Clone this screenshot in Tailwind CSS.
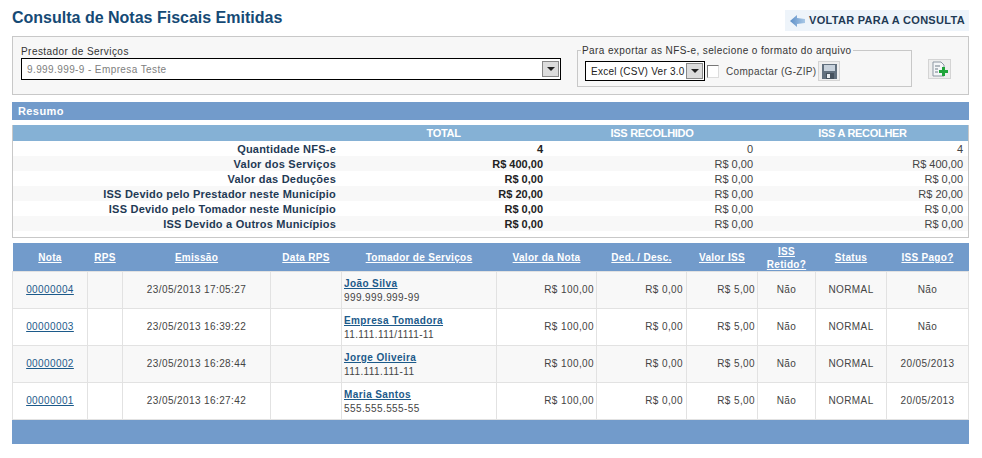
<!DOCTYPE html>
<html lang="pt-BR">
<head>
<meta charset="UTF-8" />
<title>Consulta de Notas Fiscais Emitidas</title>
<script src="https://cdn.jsdelivr.net/npm/@tailwindcss/browser@4"></script>
</head>
<body class="bg-white font-['Liberation_Sans',Arial,sans-serif] text-[10px] tracking-[0.4px] text-[#444] overflow-hidden">
<div class="w-[957px] ml-3">

  <!-- titulo -->
  <div class="flex justify-between h-[36px]">
    <h1 class="text-[16px] leading-[18px] pt-[9px] font-bold tracking-normal text-[#154a75]">Consulta de Notas Fiscais Emitidas</h1>
    <a class="mt-[10px] h-[21px] w-[184px] bg-[#eef4fa] flex items-center pl-[5px] gap-[4px] text-[11px] font-bold text-[#1f3a55] tracking-[0.3px] whitespace-nowrap">
      <svg class="w-[15px] h-[12px]" viewBox="0 0 15 12"><defs><linearGradient id="seta"><stop offset="0" stop-color="#5f90c8"/><stop offset="1" stop-color="#a9c8e6"/></linearGradient></defs><path d="M0 6 L7 0 V3 L15 4 V8 L7 9 V12 Z" fill="url(#seta)"/></svg>
      VOLTAR PARA A CONSULTA
    </a>
  </div>

  <!-- filtros -->
  <div class="h-[59px] border border-[#c8c8c8] bg-[#f7f7f7] flex items-start">
    <div class="ml-[8px] w-[540px] pt-[8px]">
      <div class="leading-[13px] text-[#333] tracking-[0.45px]">Prestador de Serviços</div>
      <div class="h-[22px] border border-black bg-white flex items-center justify-between pl-[5px] pr-px text-[#808080]">
        9.999.999-9 - Empresa Teste
        <span class="w-[17px] h-[16px] border border-[#888] bg-[#dcdcdc] flex items-center justify-center">
          <svg class="w-[8px] h-[4px]" viewBox="0 0 8 4"><path d="M0 0H8L4 4Z" fill="#222"/></svg>
        </span>
      </div>
    </div>
    <fieldset class="ml-[16px] mt-[7px] w-[335px] h-[43px] border border-[#c8c8c8] p-0 min-w-0">
      <legend class="ml-[3px] px-[1px] leading-[13px] text-[#333]">Para exportar as NFS-e, selecione o formato do arquivo</legend>
      <div class="flex items-center pl-[7px] mt-[4px]">
        <span class="w-[120px] h-[20px] border border-black bg-white flex items-center justify-between pl-[5px] pr-px tracking-[0.25px] text-[#222] whitespace-nowrap">
          Excel (CSV) Ver 3.0
          <span class="w-[17px] h-[16px] border border-[#888] bg-[#dcdcdc] flex items-center justify-center">
            <svg class="w-[8px] h-[4px]" viewBox="0 0 8 4"><path d="M0 0H8L4 4Z" fill="#222"/></svg>
          </span>
        </span>
        <span class="ml-[2px] w-[12px] h-[13px] border border-t-[#777] border-l-[#777] border-r-[#ddd] border-b-[#ddd] bg-white"></span>
        <span class="ml-[7px] tracking-[0.32px] whitespace-nowrap">Compactar (G-ZIP)</span>
        <span class="ml-[2px] w-[22px] h-[20px] border border-[#d4d4d4] bg-[#eee] flex items-center justify-center">
          <svg class="w-[15px] h-[15px]" viewBox="0 0 15 15"><path d="M0 0H15V15H0Z" fill="#62707e"/><path d="M2 1H13V7H2Z" fill="#c8d2dc"/><path d="M4 9H12V15H4Z" fill="#46525e"/><path d="M5 10H8V14H5Z" fill="#e8ecef"/></svg>
        </span>
      </div>
    </fieldset>
    <span class="ml-[16px] mt-[22px] w-[23px] h-[20px] border border-[#d4d4d4] bg-[#eee] flex items-center justify-center">
      <svg class="w-[18px] h-[16px]" viewBox="0 0 18 16"><path d="M2 1H10L13 4V15H2Z" fill="#f4f6f8" stroke="#8d98a3"/><path d="M4 5H9M4 8H7M4 11H7" stroke="#6f7c88"/><path d="M11 6H14V9H17V12H14V15H11V12H8V9H11Z" fill="#1fa53a"/></svg>
    </span>
  </div>

  <!-- resumo -->
  <div class="mt-[7px] h-[18px] bg-[#729bcb] text-white text-[11px] font-bold pl-[6px] leading-[18px]">Resumo</div>
  <div class="mt-[5px] border-x border-b border-[#c8c8c8] h-[113px]">
    <table class="w-full table-fixed border-collapse text-[11px] leading-[15px]">
      <colgroup><col class="w-[327px]" /><col class="w-[207px]" /><col class="w-[210px]" /><col /></colgroup>
      <thead class="bg-[#85b1d5] text-white font-bold text-center tracking-[-0.3px]">
        <tr class="h-[16px]"><th></th><th>TOTAL</th><th>ISS RECOLHIDO</th><th>ISS A RECOLHER</th></tr>
      </thead>
      <tbody class="text-right tracking-normal [&_td]:pt-[2px] [&_td]:leading-[13px]">
        <tr class="h-[15px]"><td class="pr-[4px] font-bold text-[#1f3a55] tracking-[0.22px]">Quantidade NFS-e</td><td class="pr-[4px] font-bold text-[#222]">4</td><td class="pr-[4px]">0</td><td class="pr-[5px]">4</td></tr>
        <tr class="h-[15px] bg-[#f8f8f8]"><td class="pr-[4px] font-bold text-[#1f3a55] tracking-[0.22px]">Valor dos Serviços</td><td class="pr-[4px] font-bold text-[#222]">R$ 400,00</td><td class="pr-[4px]">R$ 0,00</td><td class="pr-[5px]">R$ 400,00</td></tr>
        <tr class="h-[15px]"><td class="pr-[4px] font-bold text-[#1f3a55] tracking-[0.22px]">Valor das Deduções</td><td class="pr-[4px] font-bold text-[#222]">R$ 0,00</td><td class="pr-[4px]">R$ 0,00</td><td class="pr-[5px]">R$ 0,00</td></tr>
        <tr class="h-[15px] bg-[#f8f8f8]"><td class="pr-[4px] font-bold text-[#1f3a55] tracking-[0.22px]">ISS Devido pelo Prestador neste Município</td><td class="pr-[4px] font-bold text-[#222]">R$ 20,00</td><td class="pr-[4px]">R$ 0,00</td><td class="pr-[5px]">R$ 20,00</td></tr>
        <tr class="h-[15px]"><td class="pr-[4px] font-bold text-[#1f3a55] tracking-[0.22px]">ISS Devido pelo Tomador neste Município</td><td class="pr-[4px] font-bold text-[#222]">R$ 0,00</td><td class="pr-[4px]">R$ 0,00</td><td class="pr-[5px]">R$ 0,00</td></tr>
        <tr class="h-[15px] bg-[#f8f8f8]"><td class="pr-[4px] font-bold text-[#1f3a55] tracking-[0.22px]">ISS Devido a Outros Municípios</td><td class="pr-[4px] font-bold text-[#222]">R$ 0,00</td><td class="pr-[4px]">R$ 0,00</td><td class="pr-[5px]">R$ 0,00</td></tr>
      </tbody>
    </table>
  </div>

  <!-- notas -->
  <table class="mt-[5px] w-full table-fixed border-collapse leading-[14px] text-center">
    <colgroup>
      <col class="w-[75px]" /><col class="w-[35px]" /><col class="w-[148px]" /><col class="w-[71px]" /><col class="w-[155px]" /><col class="w-[100px]" /><col class="w-[90px]" /><col class="w-[71px]" /><col class="w-[58px]" /><col class="w-[71px]" /><col />
    </colgroup>
    <thead class="bg-[#729bcb] text-white font-bold underline tracking-[0.3px]">
      <tr class="h-[28px] [&_th]:pt-[2px]">
        <th>Nota</th><th>RPS</th><th>Emissão</th><th>Data RPS</th><th>Tomador de Serviços</th><th>Valor da Nota</th><th>Ded. / Desc.</th><th>Valor ISS</th><th class="leading-[13px]">ISS<br />Retido?</th><th>Status</th><th>ISS Pago?</th>
      </tr>
    </thead>
    <tbody>
      <tr class="h-[37px] bg-[#f8f8f8]">
        <td class="border border-[#e2e2e2]"><a class="underline text-[#1c5a8a]">00000004</a></td><td class="border border-[#e2e2e2]"></td><td class="border border-[#e2e2e2]">23/05/2013 17:05:27</td><td class="border border-[#e2e2e2]"></td>
        <td class="border border-[#e2e2e2] text-left pl-[2px] pt-[2px]"><a class="block font-bold underline text-[#1c5a8a]">João Silva</a>999.999.999-99</td>
        <td class="border border-[#e2e2e2] text-right pr-[2px]">R$ 100,00</td><td class="border border-[#e2e2e2] text-right pr-[3px]">R$ 0,00</td><td class="border border-[#e2e2e2] text-right pr-[2px]">R$ 5,00</td><td class="border border-[#e2e2e2]">Não</td><td class="border border-[#e2e2e2]">NORMAL</td><td class="border border-[#e2e2e2]">Não</td>
      </tr>
      <tr class="h-[37px] bg-white">
        <td class="border border-[#e2e2e2]"><a class="underline text-[#1c5a8a]">00000003</a></td><td class="border border-[#e2e2e2]"></td><td class="border border-[#e2e2e2]">23/05/2013 16:39:22</td><td class="border border-[#e2e2e2]"></td>
        <td class="border border-[#e2e2e2] text-left pl-[2px] pt-[2px]"><a class="block font-bold underline text-[#1c5a8a]">Empresa Tomadora</a>11.111.111/1111-11</td>
        <td class="border border-[#e2e2e2] text-right pr-[2px]">R$ 100,00</td><td class="border border-[#e2e2e2] text-right pr-[3px]">R$ 0,00</td><td class="border border-[#e2e2e2] text-right pr-[2px]">R$ 5,00</td><td class="border border-[#e2e2e2]">Não</td><td class="border border-[#e2e2e2]">NORMAL</td><td class="border border-[#e2e2e2]">Não</td>
      </tr>
      <tr class="h-[37px] bg-[#f8f8f8]">
        <td class="border border-[#e2e2e2]"><a class="underline text-[#1c5a8a]">00000002</a></td><td class="border border-[#e2e2e2]"></td><td class="border border-[#e2e2e2]">23/05/2013 16:28:44</td><td class="border border-[#e2e2e2]"></td>
        <td class="border border-[#e2e2e2] text-left pl-[2px] pt-[2px]"><a class="block font-bold underline text-[#1c5a8a]">Jorge Oliveira</a>111.111.111-11</td>
        <td class="border border-[#e2e2e2] text-right pr-[2px]">R$ 100,00</td><td class="border border-[#e2e2e2] text-right pr-[3px]">R$ 0,00</td><td class="border border-[#e2e2e2] text-right pr-[2px]">R$ 5,00</td><td class="border border-[#e2e2e2]">Não</td><td class="border border-[#e2e2e2]">NORMAL</td><td class="border border-[#e2e2e2]">20/05/2013</td>
      </tr>
      <tr class="h-[37px] bg-white">
        <td class="border border-[#e2e2e2]"><a class="underline text-[#1c5a8a]">00000001</a></td><td class="border border-[#e2e2e2]"></td><td class="border border-[#e2e2e2]">23/05/2013 16:27:42</td><td class="border border-[#e2e2e2]"></td>
        <td class="border border-[#e2e2e2] text-left pl-[2px] pt-[2px]"><a class="block font-bold underline text-[#1c5a8a]">Maria Santos</a>555.555.555-55</td>
        <td class="border border-[#e2e2e2] text-right pr-[2px]">R$ 100,00</td><td class="border border-[#e2e2e2] text-right pr-[3px]">R$ 0,00</td><td class="border border-[#e2e2e2] text-right pr-[2px]">R$ 5,00</td><td class="border border-[#e2e2e2]">Não</td><td class="border border-[#e2e2e2]">NORMAL</td><td class="border border-[#e2e2e2]">20/05/2013</td>
      </tr>
    </tbody>
  </table>
  <div class="h-[24px] bg-[#729bcb]"></div>
</div>
</body>
</html>
